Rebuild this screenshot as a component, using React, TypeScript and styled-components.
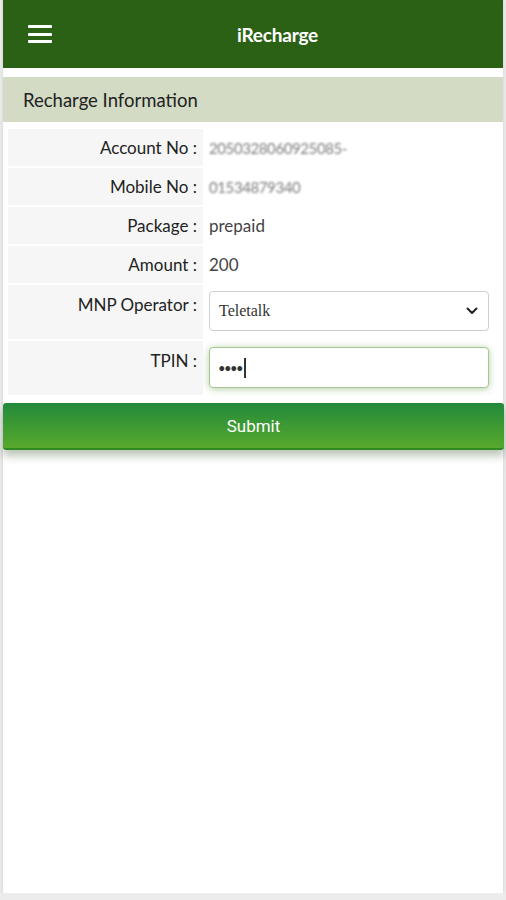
import React from 'react';
import styled, { createGlobalStyle } from 'styled-components';

const GlobalStyle = createGlobalStyle`
  body {
    margin: 0;
    background: #ececec;
    font-family: Lato, "Open Sans", sans-serif;
  }
`;

// carte blanche qui occupe tout l'écran
const Page = styled.div`
  width: 500px;
  min-height: 893px;
  margin: 0 3px;
  background: #ffffff;
  box-shadow: 0 0 4px rgba(0, 0, 0, 0.12);
`;

const Header = styled.header`
  height: 68px;
  display: flex;
  align-items: center;
  padding-left: 25px;
  background: #2b6115;
  box-sizing: border-box;
`;

const MenuButton = styled.div`
  width: 24px;
  display: flex;
  flex-direction: column;
  gap: 4.5px;

  span {
    display: block;
    height: 3px;
    border-radius: 1px;
    background: #ffffff;
  }
`;

const Title = styled.h1`
  flex: 1;
  margin: 0;
  text-align: center;
  color: #ffffff;
  font-size: 19px;
  font-weight: 700;
  letter-spacing: -0.2px;
`;

const SectionBar = styled.div`
  margin-top: 9px;
  height: 45px;
  display: flex;
  align-items: center;
  padding-left: 20px;
  background: #d3dbc4;
  color: #222;
  font-size: 18.5px;
`;

const Table = styled.div`
  display: flex;
  flex-direction: column;
  gap: 2px;
  padding: 7px 2px 8px 5px;
`;

const Row = styled.div<{ $tall?: boolean }>`
  display: flex;
  min-height: ${p => (p.$tall ? '54px' : '37px')};
`;

const Label = styled.div<{ $top?: boolean }>`
  width: 195px;
  flex: none;
  display: flex;
  justify-content: flex-end;
  align-items: ${p => (p.$top ? 'flex-start' : 'center')};
  padding: ${p => (p.$top ? '9px 6px 0 0' : '0 6px 0 0')};
  box-sizing: border-box;
  background: #f6f6f6;
  color: #222;
  font-size: 17px;
`;

const Value = styled.div<{ $blur?: boolean }>`
  flex: 1;
  display: flex;
  align-items: center;
  padding: 0 12px 0 6px;
  color: #444;
  font-size: 17px;

  span {
    filter: ${p => (p.$blur ? 'blur(1.2px)' : 'none')};
    color: ${p => (p.$blur ? '#7d7d7d' : '#444')};
    font-size: ${p => (p.$blur ? '15px' : 'inherit')};
    letter-spacing: ${p => (p.$blur ? '-0.4px' : '0')};
  }
`;

const Field = styled.div`
  flex: 1;
  padding: 6px 12px 6px 6px;
`;

const SelectBox = styled.div`
  height: 40px;
  display: flex;
  align-items: center;
  justify-content: space-between;
  padding: 0 10px 0 9px;
  border: 1px solid #cfcfcf;
  border-radius: 4px;
  box-sizing: border-box;
  background: #fff;
  color: #333;
  font-family: "Liberation Serif", serif;
  font-size: 16px;
`;

const PinInput = styled.div`
  height: 41px;
  display: flex;
  align-items: center;
  padding-left: 8px;
  border: 1px solid #a6c696;
  border-radius: 4px;
  box-sizing: border-box;
  background: #fff;
  box-shadow: 0 1px 7px rgba(80, 150, 50, 0.45);
  color: #333;
  font-size: 13px;
  letter-spacing: -1.5px;

  i {
    display: inline-block;
    width: 1.5px;
    height: 20px;
    margin-left: 2px;
    background: #333;
  }
`;

const SubmitButton = styled.div`
  height: 47px;
  display: flex;
  align-items: center;
  justify-content: center;
  margin: 0 -1px 0 0;
  border-radius: 3px;
  border-bottom: 2px solid #2f8a22;
  box-sizing: border-box;
  background: linear-gradient(#228a3b, #58a92c);
  box-shadow: 0 6px 9px rgba(60, 90, 50, 0.35);
  color: #ffffff;
  font-family: Roboto, sans-serif;
  font-size: 17px;
`;

const Chevron = () => (
  <svg width="12" height="8" viewBox="0 0 12 8" fill="none">
    <path d="M1.5 1.5 6 6l4.5-4.5" stroke="#222" strokeWidth="2" strokeLinecap="round" strokeLinejoin="round" />
  </svg>
);

const App: React.FC = () => {
  return (
    <Page>
      <GlobalStyle />
      <Header>
        <MenuButton>
          <span />
          <span />
          <span />
        </MenuButton>
        <Title>iRecharge</Title>
      </Header>

      <SectionBar>Recharge Information</SectionBar>

      <Table>
        <Row>
          <Label>Account No :</Label>
          <Value $blur><span>2050328060925085-</span></Value>
        </Row>
        <Row>
          <Label>Mobile No :</Label>
          <Value $blur><span>01534879340</span></Value>
        </Row>
        <Row>
          <Label>Package :</Label>
          <Value>prepaid</Value>
        </Row>
        <Row>
          <Label>Amount :</Label>
          <Value>200</Value>
        </Row>
        <Row $tall>
          <Label $top>MNP Operator :</Label>
          <Field>
            <SelectBox>
              Teletalk
              <Chevron />
            </SelectBox>
          </Field>
        </Row>
        <Row $tall>
          <Label $top>TPIN :</Label>
          <Field>
            <PinInput>
              ••••<i />
            </PinInput>
          </Field>
        </Row>
      </Table>

      <SubmitButton>Submit</SubmitButton>
    </Page>
  );
};

export default App;
